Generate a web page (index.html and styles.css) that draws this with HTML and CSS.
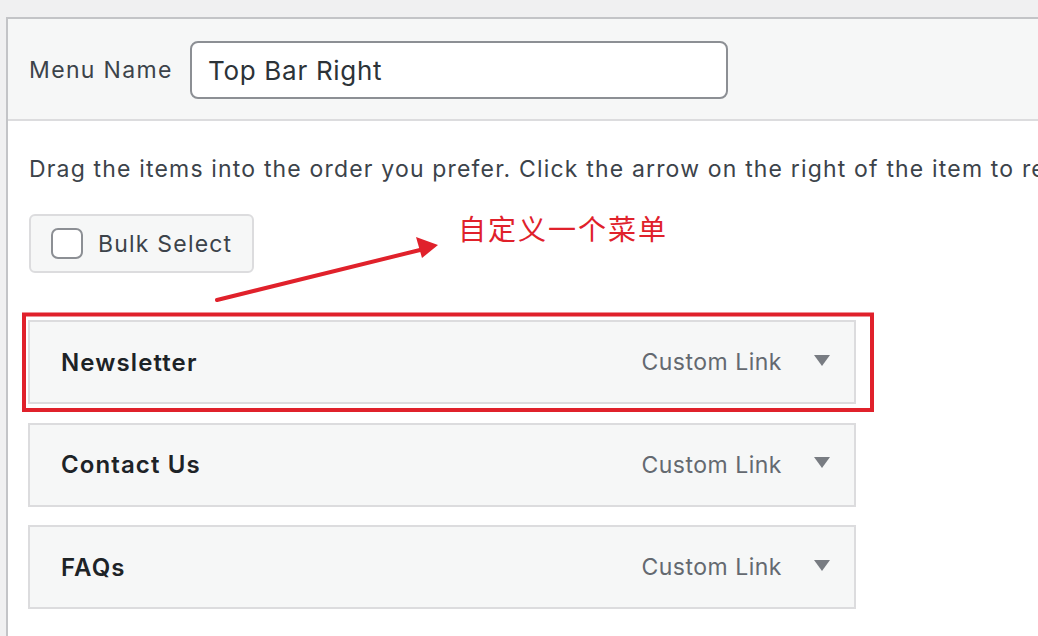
FILE: index.html
```html
<!DOCTYPE html>
<html lang="en">
<head>
<meta charset="utf-8">
<title>Menu</title>
<link rel="stylesheet" href="styles.css">
</head>
<body>
<div class="page">
  <div class="panel">
    <div class="panel-header">
      <label class="menu-label" for="menu-name">Menu Name</label>
      <input id="menu-name" class="menu-input" type="text" value="Top Bar Right">
    </div>
    <div class="panel-body">
      <p class="instructions">Drag the items into the order you prefer. Click the arrow on the right of the item to reveal additional configuration options.</p>
      <div class="bulk-btn">
        <span class="checkbox"></span>
        <span class="bulk-text">Bulk Select</span>
      </div>
      <ul class="menu-items">
        <li class="menu-item">
          <span class="item-title">Newsletter</span>
          <span class="item-controls"><span class="item-type">Custom Link</span><span class="item-arrow"></span></span>
        </li>
        <li class="menu-item">
          <span class="item-title">Contact Us</span>
          <span class="item-controls"><span class="item-type">Custom Link</span><span class="item-arrow"></span></span>
        </li>
        <li class="menu-item">
          <span class="item-title">FAQs</span>
          <span class="item-controls"><span class="item-type">Custom Link</span><span class="item-arrow"></span></span>
        </li>
      </ul>
    </div>
  </div>
  <div class="annotation">
    <svg class="annotation-svg" width="1038" height="636" viewBox="0 0 1038 636">
      <rect x="24" y="314.5" width="848" height="95.5" fill="none" stroke="#e0212b" stroke-width="4"/>
      <line x1="217" y1="300" x2="420" y2="250" stroke="#e0212b" stroke-width="4" stroke-linecap="round"/>
      <polygon points="438,245 416,237 422,258" fill="#e0212b"/>
    </svg>
    <span class="annotation-text">自定义一个菜单</span>
  </div>
</div>
</body>
</html>
```

FILE: styles.css
```css
* { box-sizing: border-box; }
html, body { margin: 0; padding: 0; }
body {
  background: #f0f0f1;
  font-family: Inter, "Noto Sans", "Noto Sans CJK SC", sans-serif;
  color: #2c3338;
  width: 1038px;
  height: 636px;
  overflow: hidden;
}
.page {
  position: relative;
  width: 1038px;
  height: 636px;
  padding-top: 17px;
  padding-left: 6px;
  overflow: hidden;
}
.panel {
  border-top: 2px solid #c3c4c7;
  border-left: 2px solid #c3c4c7;
  background: #fff;
  width: 1100px;
  height: 640px;
}
.panel-header {
  background: #f6f7f7;
  border-bottom: 2px solid #dcdcde;
  display: flex;
  align-items: center;
  padding: 22px 0 20px 21px;
  height: 102px;
}
.menu-label {
  width: 161px;
  font-size: 23px;
  color: #3c434a;
  letter-spacing: 1.35px;
}
.menu-input {
  width: 538px;
  height: 58px;
  border: 2px solid #8c8f94;
  border-radius: 8px;
  background: #fff;
  font-family: inherit;
  font-size: 26px;
  letter-spacing: 0.7px;
  color: #2c3338;
  padding: 0 16px;
  outline: none;
}
.panel-body {
  padding: 32px 0 0 21px;
}
.instructions {
  margin: 0;
  font-size: 23px;
  line-height: 32px;
  white-space: nowrap;
  color: #3c434a;
  letter-spacing: 1.17px;
}
.bulk-btn {
  margin-top: 29px;
  width: 225px;
  height: 59px;
  border: 2px solid #dcdcde;
  border-radius: 6px;
  background: #f6f7f7;
  display: flex;
  align-items: center;
  padding-left: 20px;
  gap: 15px;
}
.checkbox {
  width: 32px;
  height: 31px;
  border: 2px solid #8c8f94;
  border-radius: 7px;
  background: #fff;
}
.bulk-text {
  font-size: 23px;
  letter-spacing: 1.2px;
  color: #3c434a;
}
.menu-items {
  list-style: none;
  margin: 47px 0 0 -1px;
  padding: 0;
  display: flex;
  flex-direction: column;
  gap: 18.5px;
}
.menu-item {
  width: 828px;
  height: 84px;
  border: 2px solid #dcdcde;
  background: #f6f7f7;
  display: flex;
  align-items: center;
  justify-content: space-between;
  padding: 0 24px 0 31px;
}
.item-title {
  font-size: 24px;
  font-weight: 600;
  letter-spacing: 1.1px;
  color: #1d2327;
}
.item-controls {
  display: flex;
  align-items: center;
  gap: 32px;
}
.item-type {
  font-size: 23px;
  letter-spacing: 0.5px;
  color: #646970;
}
.item-arrow {
  width: 0;
  height: 0;
  border-left: 8px solid transparent;
  border-right: 8px solid transparent;
  border-top: 11px solid #787c82;
  margin-top: -4px;
}
.annotation {
  position: absolute;
  left: 0;
  top: 0;
  width: 1038px;
  height: 636px;
  pointer-events: none;
}
.annotation-svg {
  position: absolute;
  left: 0;
  top: 0;
}
.annotation-text {
  position: absolute;
  left: 458px;
  top: 208px;
  font-family: "Noto Sans CJK SC", sans-serif;
  font-size: 28px;
  line-height: 40px;
  color: #e0212b;
  letter-spacing: 2px;
}
```
